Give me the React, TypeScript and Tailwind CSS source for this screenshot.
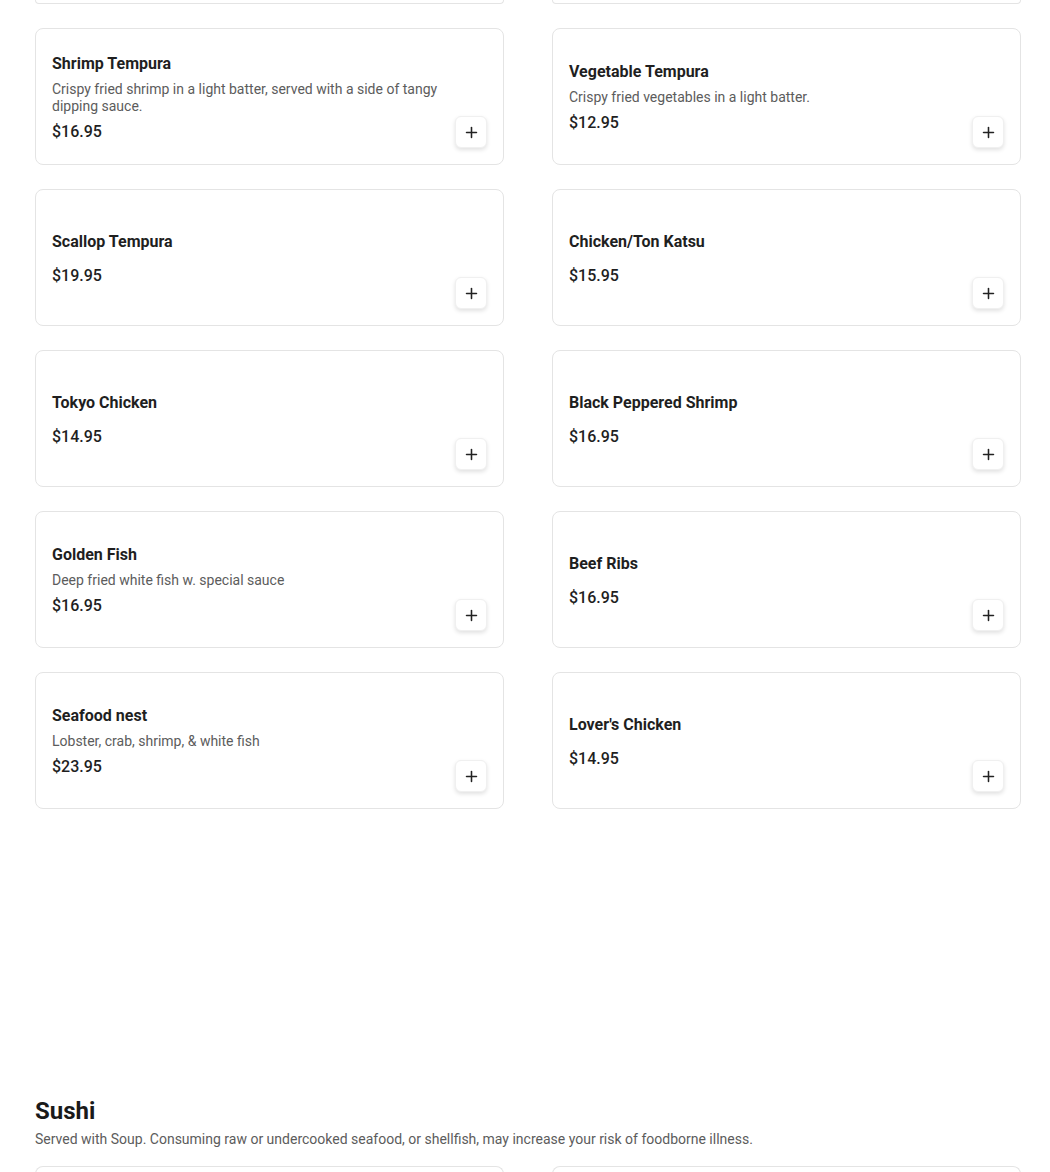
import { Plus } from 'lucide-react';

interface Item {
  name: string;
  desc?: string;
  price: string;
}

const appetizers: Item[] = [
  { name: 'Shrimp Tempura', desc: 'Crispy fried shrimp in a light batter, served with a side of tangy dipping sauce.', price: '$16.95' },
  { name: 'Vegetable Tempura', desc: 'Crispy fried vegetables in a light batter.', price: '$12.95' },
  { name: 'Scallop Tempura', price: '$19.95' },
  { name: 'Chicken/Ton Katsu', price: '$15.95' },
  { name: 'Tokyo Chicken', price: '$14.95' },
  { name: 'Black Peppered Shrimp', price: '$16.95' },
  { name: 'Golden Fish', desc: 'Deep fried white fish w. special sauce', price: '$16.95' },
  { name: 'Beef Ribs', price: '$16.95' },
  { name: 'Seafood nest', desc: 'Lobster, crab, shrimp, & white fish', price: '$23.95' },
  { name: "Lover's Chicken", price: '$14.95' },
];

function MenuCard({ item }: { item: Item }) {
  return (
    <div className="h-[137px] rounded-lg border border-[#e4e4e4] bg-white pl-4 pr-[16px] py-4 flex gap-4">
      <div className="flex-1 min-w-0 pt-[2px] flex flex-col justify-center">
        <h3 className="text-base leading-6 font-bold text-[#1f1f1f]">{item.name}</h3>
        <p className="mt-[5px] text-sm leading-[17px] text-[#5c5c5c]">{item.desc}</p>
        <p className="mt-[5px] text-base leading-6 font-medium text-[#1f1f1f]">{item.price}</p>
      </div>
      <button className="self-end w-8 h-8 shrink-0 rounded-md bg-white border border-[#f0f0f0] shadow-[0_2px_4px_rgba(0,0,0,0.12)] flex items-center justify-center text-[#222]">
        <Plus size={17} strokeWidth={2.2} />
      </button>
    </div>
  );
}

export default function App() {
  return (
    <div className="min-h-[1172px] bg-white pl-[35px] pr-[29px] overflow-hidden" style={{ fontFamily: 'Roboto, "Liberation Sans", sans-serif' }}>
      {/* bottom edge of the row scrolled above the fold */}
      <div className="grid grid-cols-2 gap-x-12">
        <div className="h-[4px] rounded-b-lg border-x border-b border-[#e4e4e4]" />
        <div className="h-[4px] rounded-b-lg border-x border-b border-[#e4e4e4]" />
      </div>

      <div className="mt-6 grid grid-cols-2 gap-x-12 gap-y-6">
        {appetizers.map((it) => (
          <MenuCard key={it.name} item={it} />
        ))}
      </div>

      <section className="mt-[286px]">
        <h2 className="text-2xl leading-8 font-bold text-[#1a1a1a]">Sushi</h2>
        <p className="mt-[2px] text-sm leading-5 text-[#5c5c5c]">
          Served with Soup. Consuming raw or undercooked seafood, or shellfish, may increase your risk of foodborne illness.
        </p>
        {/* tops of the first sushi cards, below the fold */}
        <div className="mt-[17px] grid grid-cols-2 gap-x-12">
          <div className="h-[10px] rounded-t-lg border-x border-t border-[#e4e4e4]" />
          <div className="h-[10px] rounded-t-lg border-x border-t border-[#e4e4e4]" />
        </div>
      </section>
    </div>
  );
}
